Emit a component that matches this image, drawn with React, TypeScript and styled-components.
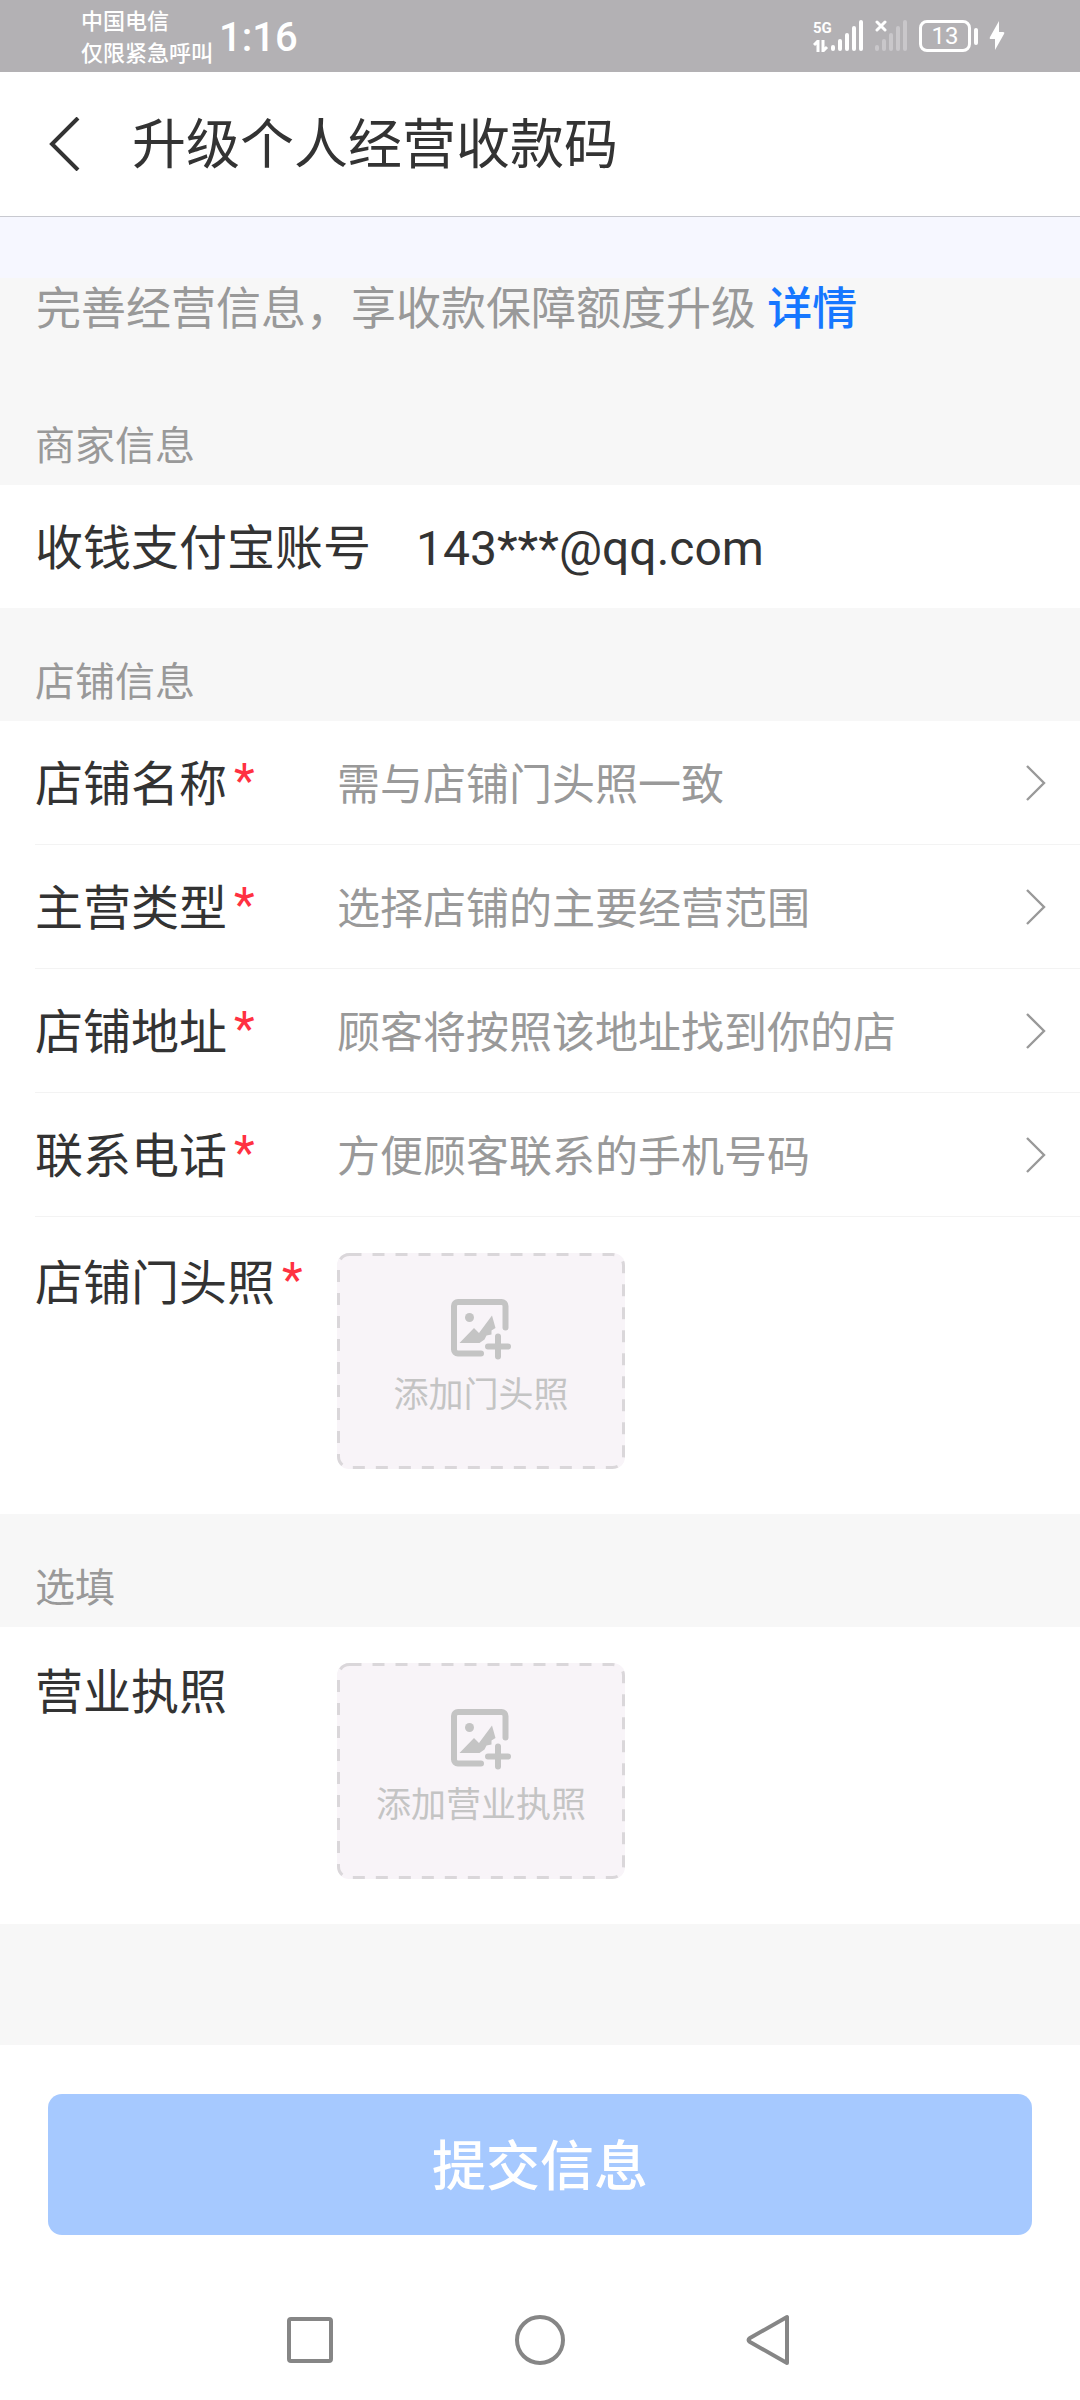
import React from "react";
import styled, { createGlobalStyle } from "styled-components";

const color = {
  text: "#333333",
  muted: "#999999",
  faint: "#c4c4c4",
  surface: "#ffffff",
  page: "#f7f7f7",
  line: "#f3f3f3",
  status: "#b3b1b4",
  link: "#1677ff",
  required: "#ff3141",
  primary: "#a6c9ff",
};

const GlobalStyle = createGlobalStyle`
  *, *::before, *::after { box-sizing: border-box; }
  body {
    margin: 0;
    background: ${color.page};
    color: ${color.text};
    font-family: Roboto, "Noto Sans CJK SC", sans-serif;
  }
  button, input, select {
    margin: 0;
    padding: 0;
    border: 0;
    background: none;
    color: inherit;
    font: inherit;
  }
`;

const Page = styled.div`
  display: flex;
  flex-direction: column;
  min-height: 100vh;
`;

const StatusBar = styled.div`
  display: flex;
  align-items: center;
  height: 72px;
  padding: 0 75px 0 81px;
  background: ${color.status};
  color: ${color.surface};
`;

const Carrier = styled.div`
  padding-top: 4px;
  font-size: 22px;
  font-weight: 500;
  line-height: 32px;
`;

const Clock = styled.time`
  margin-left: 6px;
  padding-top: 4px;
  font-size: 40px;
  font-weight: 500;
  line-height: 68px;
`;

const StatusIcons = styled.div`
  display: flex;
  align-items: center;
  gap: 11px;
  height: 32px;
  margin-left: auto;
`;

const Signal = styled.div`
  display: flex;
  align-items: flex-end;
  height: 32px;
`;

const Network = styled.div`
  display: flex;
  flex-direction: column;
  justify-content: space-between;
  width: 18px;
  height: 32px;
  font-family: "Liberation Sans Narrow", Roboto, sans-serif;
  font-size: 15px;
  font-weight: 700;
  line-height: 16px;
`;

const Battery = styled.div`
  display: flex;
  align-items: center;
  gap: 3px;
`;

const BatteryBody = styled.div`
  width: 52px;
  height: 32px;
  border: 3px solid ${color.surface};
  border-radius: 8px;
  font-size: 24px;
  line-height: 27px;
  text-align: center;
`;

const BatteryTip = styled.div`
  width: 4px;
  height: 17px;
  border-radius: 2px;
  background: ${color.surface};
`;

const Header = styled.header`
  display: flex;
  align-items: center;
  gap: 24px;
  height: 145px;
  padding: 0 24px;
  border-bottom: 1px solid #c8c9d0;
  background: ${color.surface};
`;

const IconButton = styled.button`
  display: grid;
  place-items: center;
  width: 84px;
  height: 84px;
`;

const Title = styled.h1`
  margin: 0;
  padding-top: 4px;
  font-size: 54px;
  font-weight: 400;
  line-height: 84px;
`;

const Form = styled.form`
  display: flex;
  flex: 1;
  flex-direction: column;
`;

const Band = styled.div`
  height: 61px;
  background: #f6f7ff;
`;

const Intro = styled.p`
  margin: 0;
  padding: 2px 36px 32px;
  color: ${color.muted};
  font-size: 45px;
  line-height: 60px;
`;

const DetailLink = styled.a`
  color: ${color.link};
  font-weight: 500;
  text-decoration: none;
`;

const SectionTitle = styled.h2`
  margin: 0;
  padding: 51px 35px 14px;
  color: ${color.muted};
  font-size: 40px;
  font-weight: 400;
  line-height: 48px;
`;

const Panel = styled.div`
  padding-left: 35px;
  background: ${color.surface};
`;

const Row = styled.div`
  display: flex;
  align-items: center;
  height: 123px;
  padding-right: 33px;
  font-size: 48px;
`;

const FieldRow = styled(Row)`
  height: 124px;
  border-bottom: 1px solid ${color.line};
`;

const PhotoRow = styled.div`
  display: flex;
  align-items: flex-start;
  padding: 36px 33px 45px 0;
  font-size: 48px;
`;

const Label = styled.label`
  flex: none;
  width: 302px;
  padding-top: 3px;
  line-height: 54px;
`;

const Required = styled.span`
  margin-left: 7px;
  color: ${color.required};
  line-height: 1;
  vertical-align: 4px;
`;

const Account = styled.div`
  display: flex;
  gap: 45px;
  padding-top: 4px;
  line-height: 54px;
`;

const fieldStyle = `
  flex: 1;
  min-width: 0;
  height: 64px;
  padding-top: 4px;
  color: ${color.muted};
  font-size: 43px;
  outline: none;
`;

const TextField = styled.input`
  ${fieldStyle}
  &::placeholder { color: ${color.muted}; opacity: 1; }
`;

const SelectField = styled.select`
  ${fieldStyle}
  appearance: none;
`;

const Uploader = styled.button`
  position: relative;
  display: flex;
  flex-direction: column;
  align-items: center;
  gap: 12px;
  width: 288px;
  height: 216px;
  padding-top: 45px;
  border-radius: 12px;
  background: #f8f4f8;
  color: ${color.faint};
  font-size: 35px;
  line-height: 48px;
`;

const DashedFrame = styled.svg`
  position: absolute;
  inset: 0;
`;

const Footer = styled.footer`
  padding: 49px 48px 63px;
  background: ${color.surface};
`;

const Submit = styled.button`
  display: block;
  width: 100%;
  height: 141px;
  padding-bottom: 4px;
  border-radius: 14px;
  background: ${color.primary};
  color: ${color.surface};
  font-size: 54px;
  font-weight: 500;
`;

const NavBar = styled.nav`
  display: flex;
  justify-content: center;
  gap: 146px;
  height: 102px;
  background: ${color.surface};
`;

const Bars = ({ missing = false }: { missing?: boolean }) => (
  <svg width="33" height="32" viewBox="0 0 33 32" aria-hidden="true">
    <g fill={missing ? "#c9c7ca" : "#fff"}>
      {[6, 12, 18, 25, 31].map((h, i) => (
        <rect key={h} x={i * 7} y={31 - h} width="4" height={h} rx="2" />
      ))}
    </g>
    {missing && (
      <path d="M2 2l8 8M10 2l-8 8" stroke="#fff" strokeWidth="3" strokeLinecap="round" />
    )}
  </svg>
);

const Chevron = () => (
  <svg width="22" height="38" viewBox="0 0 22 38" fill="none" aria-hidden="true">
    <path d="M2 2l17 17L2 36" stroke="#999" strokeWidth="2.4" />
  </svg>
);

const AddImageIcon = () => (
  <svg width="62" height="62" viewBox="0 0 62 62" fill="none" aria-hidden="true">
    <path
      d="M31 55.500H8a4 4 0 0 1-4-4V8a4 4 0 0 1 4-4h43.500a4 4 0 0 1 4 4v21.500"
      stroke={color.faint}
      strokeWidth="6"
      strokeLinecap="round"
    />
    <circle cx="19.500" cy="19.500" r="4.500" fill={color.faint} />
    <path d="M9.500 45L24 30l5 5 13-17.500L45.500 30l-4 2.500v4l-5 1-2 4-5 3.500z" fill={color.faint} />
    <path d="M38 48.500h20M48 38.500v20" stroke={color.faint} strokeWidth="6" strokeLinecap="round" />
  </svg>
);

const PhotoField = ({ id, label, hint, required }: { id: string; label: string; hint: string; required?: boolean }) => (
  <PhotoRow>
    <Label htmlFor={id}>
      {label}
      {required && <Required>*</Required>}
    </Label>
    <Uploader type="button" id={id}>
      <DashedFrame width="288" height="216" fill="none" aria-hidden="true">
        <rect x="1.500" y="1.500" width="285" height="213" rx="11" stroke="#dad7da" strokeWidth="3" strokeDasharray="12 11" />
      </DashedFrame>
      <AddImageIcon />
      {hint}
    </Uploader>
  </PhotoRow>
);

const fields = [
  { id: "shop-name", label: "店铺名称", hint: "需与店铺门头照一致" },
  { id: "shop-type", label: "主营类型", hint: "选择店铺的主要经营范围", select: true },
  { id: "shop-address", label: "店铺地址", hint: "顾客将按照该地址找到你的店" },
  { id: "shop-phone", label: "联系电话", hint: "方便顾客联系的手机号码" },
];

export default function App() {
  return (
    <Page>
      <GlobalStyle />
      <StatusBar>
        <Carrier>
          <div>中国电信</div>
          <div>仅限紧急呼叫</div>
        </Carrier>
        <Clock>1:16</Clock>
        <StatusIcons>
          <Signal>
            <Network>
              5G
              <svg width="16" height="12" viewBox="0 0 16 12" fill="none" aria-hidden="true">
                <path d="M1 5l4-4v11M10 0v11l4-4" stroke="#fff" strokeWidth="3" />
              </svg>
            </Network>
            <Bars />
          </Signal>
          <Bars missing />
          <Battery>
            <BatteryBody>13</BatteryBody>
            <BatteryTip />
          </Battery>
          <svg width="16" height="30" viewBox="0 0 16 30" aria-hidden="true">
            <path d="M10 0L1 16q-1 2 1 2h4L6 29 15 13q1-2-1-2h-4z" fill="#fff" />
          </svg>
        </StatusIcons>
      </StatusBar>

      <Header>
        <IconButton type="button" aria-label="返回">
          <svg width="34" height="54" viewBox="0 0 34 54" fill="none" aria-hidden="true">
            <path d="M29 1L3 27l26 26" stroke="#333" strokeWidth="4" />
          </svg>
        </IconButton>
        <Title>升级个人经营收款码</Title>
      </Header>

      <Form onSubmit={(e) => e.preventDefault()} id="merchant-form">
        <Band />
        <Intro>
          完善经营信息，享收款保障额度升级 <DetailLink href="#detail">详情</DetailLink>
        </Intro>

        <SectionTitle>商家信息</SectionTitle>
        <Panel>
          <Row>
            <Account>
              <span>收钱支付宝账号</span>
              <span>143***@qq.com</span>
            </Account>
          </Row>
        </Panel>

        <SectionTitle>店铺信息</SectionTitle>
        <Panel>
          {fields.map((f) => (
            <FieldRow key={f.id}>
              <Label htmlFor={f.id}>
                {f.label}
                <Required>*</Required>
              </Label>
              {f.select ? (
                <SelectField id={f.id} defaultValue="">
                  <option value="">{f.hint}</option>
                </SelectField>
              ) : (
                <TextField id={f.id} placeholder={f.hint} />
              )}
              <Chevron />
            </FieldRow>
          ))}
          <PhotoField id="shop-photo" label="店铺门头照" hint="添加门头照" required />
        </Panel>

        <SectionTitle>选填</SectionTitle>
        <Panel>
          <PhotoField id="license" label="营业执照" hint="添加营业执照" />
        </Panel>
      </Form>

      <Footer>
        <Submit type="submit" form="merchant-form">提交信息</Submit>
      </Footer>
      <NavBar>
        <IconButton type="button" aria-label="最近任务">
          <svg width="52" height="52" viewBox="0 0 52 52" fill="none" aria-hidden="true">
            <rect x="5" y="5" width="42" height="42" rx="2" stroke="#868686" strokeWidth="4" />
          </svg>
        </IconButton>
        <IconButton type="button" aria-label="主页">
          <svg width="52" height="52" viewBox="0 0 52 52" fill="none" aria-hidden="true">
            <circle cx="26" cy="26" r="23" stroke="#868686" strokeWidth="4" />
          </svg>
        </IconButton>
        <IconButton type="button" aria-label="后退">
          <svg width="52" height="52" viewBox="0 0 52 52" fill="none" aria-hidden="true">
            <path d="M43 3v46L6 28q-3-2 0-4z" stroke="#868686" strokeWidth="4" strokeLinejoin="round" />
          </svg>
        </IconButton>
      </NavBar>
    </Page>
  );
}
